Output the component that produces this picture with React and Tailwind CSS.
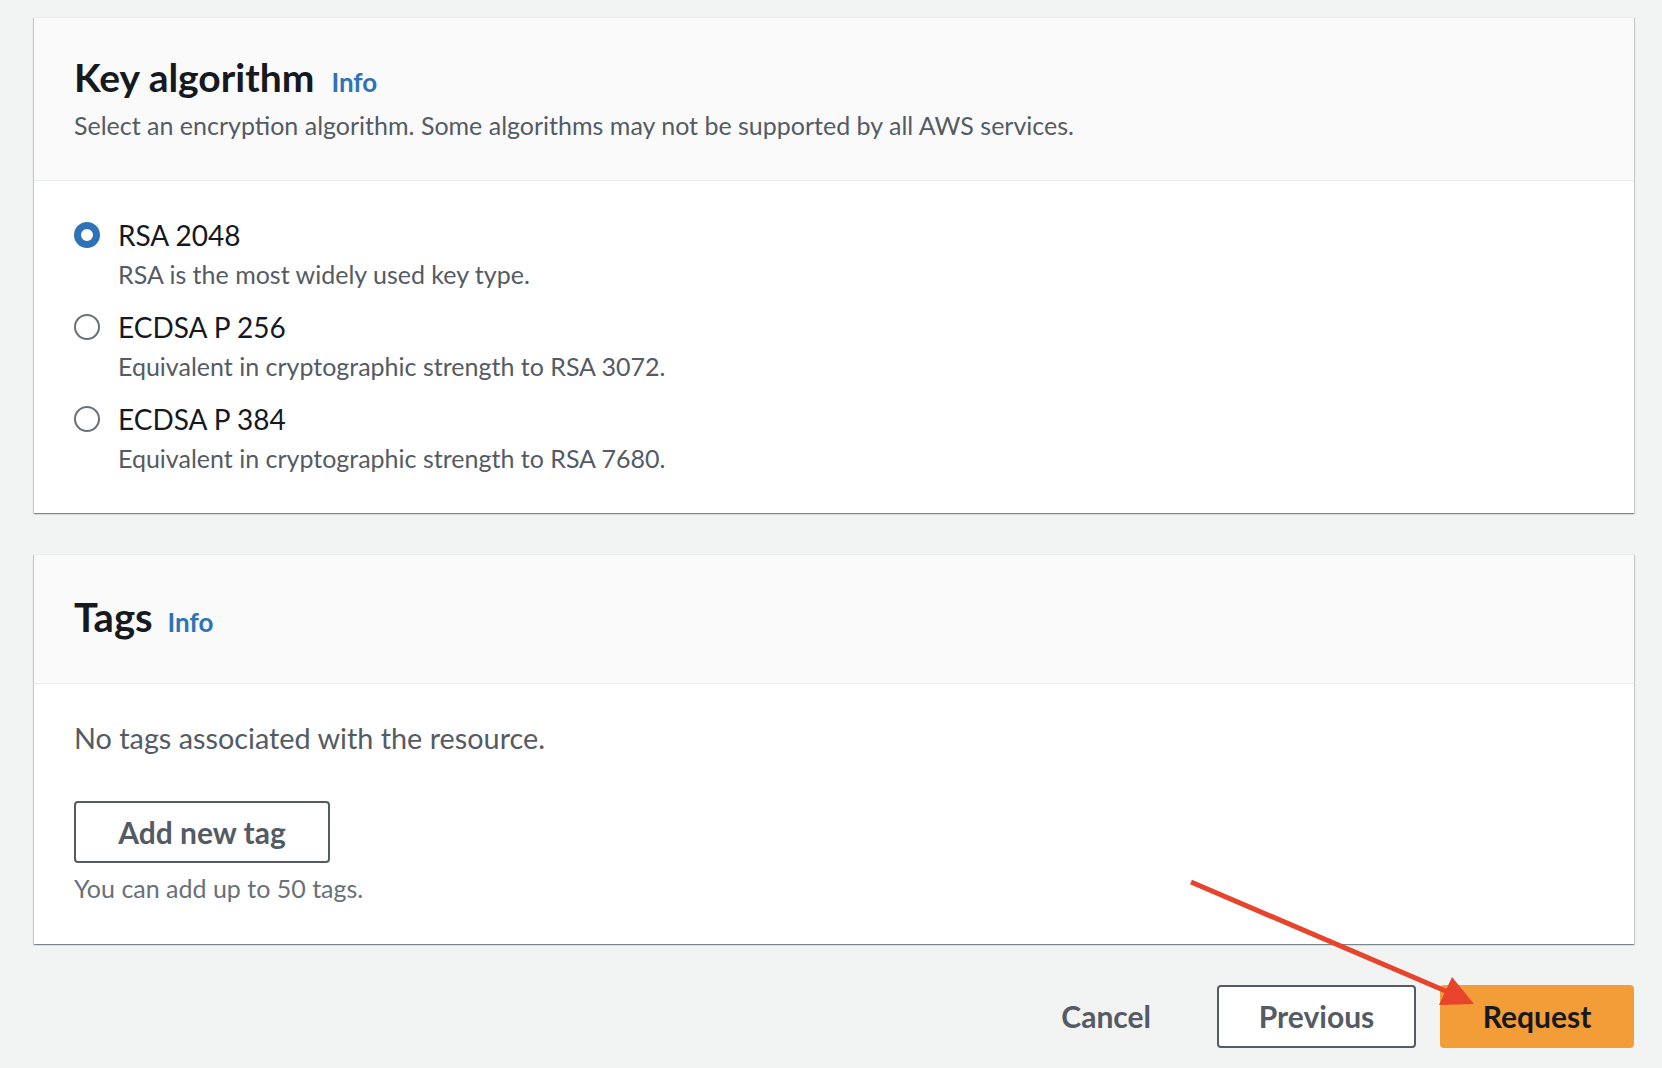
import React, { useState } from "react";

const font = { fontFamily: "Lato, 'Open Sans', sans-serif" };

const options = [
  { id: "rsa2048", label: "RSA 2048", desc: "RSA is the most widely used key type." },
  { id: "ecdsa256", label: "ECDSA P 256", desc: "Equivalent in cryptographic strength to RSA 3072." },
  { id: "ecdsa384", label: "ECDSA P 384", desc: "Equivalent in cryptographic strength to RSA 7680." },
];

const Radio = ({ checked }) =>
  checked ? (
    <span className="w-[26px] h-[26px] rounded-full border-[7px] border-[#2f73b7] bg-white shrink-0" />
  ) : (
    <span className="w-[26px] h-[26px] rounded-full border-2 border-[#687078] bg-white shrink-0" />
  );

const Card = ({ children }) => (
  <div className="bg-white border-t border-[#eaeded] shadow-[0_1px_1px_0_rgba(0,28,36,0.3),1px_1px_1px_0_rgba(0,28,36,0.15),-1px_1px_1px_0_rgba(0,28,36,0.15)]">
    {children}
  </div>
);

const App = () => {
  const [algo, setAlgo] = useState("rsa2048");

  return (
    <div className="relative w-full h-[1068px] overflow-hidden bg-[#f2f3f3] pt-[17px] pl-[34px] pr-[28px]" style={font}>
      {/* Key algorithm */}
      <Card>
        <div className="h-[163px] bg-[#fafafa] border-b border-[#eaeded] pl-[40px] pt-[37px]">
          <div className="flex items-baseline gap-[17px]">
            <h2 className="text-[39px] leading-[44px] font-bold text-[#16191f]">Key algorithm</h2>
            <a className="text-[26px] font-bold text-[#2f73b7]">Info</a>
          </div>
          <p className="mt-[7px] text-[25px] leading-[32px] text-[#545b64]">
            Select an encryption algorithm. Some algorithms may not be supported by all AWS services.
          </p>
        </div>
        <div className="h-[332px] pl-[40px] pt-[36px] flex flex-col gap-[19px]">
          {options.map((o) => (
            <label key={o.id} className="flex flex-col cursor-pointer" onClick={() => setAlgo(o.id)}>
              <div className="flex items-center gap-[18px]">
                <Radio checked={algo === o.id} />
                <span className="text-[28px] leading-[36px] text-[#16191f]">{o.label}</span>
              </div>
              <span className="mt-[5px] ml-[44px] text-[25px] leading-[32px] text-[#545b64]">{o.desc}</span>
            </label>
          ))}
        </div>
      </Card>

      {/* Tags */}
      <div className="mt-[41px]">
        <Card>
          <div className="h-[129px] bg-[#fafafa] border-b border-[#eaeded] pl-[40px] pt-[40px]">
            <div className="flex items-baseline gap-[15px]">
              <h2 className="text-[40px] leading-[44px] font-bold text-[#16191f]">Tags</h2>
              <a className="text-[26px] font-bold text-[#2f73b7]">Info</a>
            </div>
          </div>
          <div className="h-[260px] pl-[40px] pt-[36px]">
            <p className="text-[28.8px] leading-[36px] text-[#545b64]">No tags associated with the resource.</p>
            <button className="mt-[45px] w-[256px] h-[62px] rounded-[4px] border-2 border-[#545b64] bg-white text-[30px] font-bold text-[#545b64]">
              Add new tag
            </button>
            <p className="mt-[9px] text-[25px] leading-[32px] text-[#687078]">You can add up to 50 tags.</p>
          </div>
        </Card>
      </div>

      {/* Actions */}
      <div className="mt-[41px] flex justify-end items-center gap-[24px]">
        <button className="h-[63px] px-[42px] text-[30px] font-bold text-[#545b64]">Cancel</button>
        <button className="h-[63px] w-[199px] rounded-[4px] border-2 border-[#545b64] bg-white text-[30px] font-bold text-[#545b64]">
          Previous
        </button>
        <button className="h-[63px] w-[194px] rounded-[4px] bg-[#f29d38] text-[30px] font-bold text-[#16191f]">
          Request
        </button>
      </div>

      {/* annotation arrow */}
      <svg className="absolute left-0 top-0 pointer-events-none" width="1662" height="1068">
        <line x1="1191" y1="882" x2="1448" y2="992" stroke="#e8432b" strokeWidth="5" />
        <polygon points="1474,1004 1439,1005 1452,977" fill="#e8432b" />
      </svg>
    </div>
  );
};

export default App;
